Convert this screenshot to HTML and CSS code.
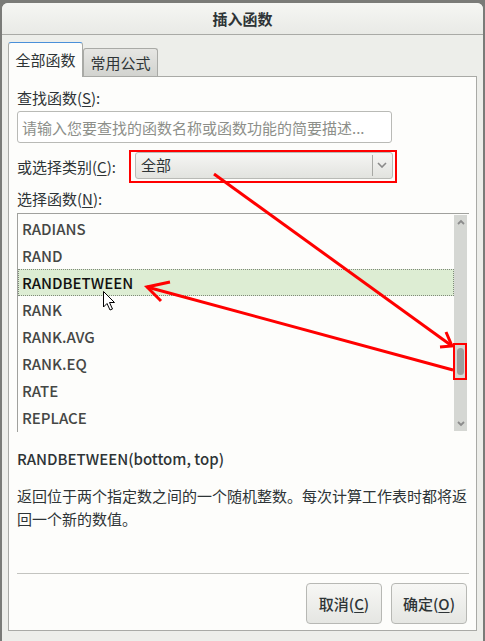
FILE: index.html
```html
<!DOCTYPE html>
<html lang="zh">
<head>
<meta charset="utf-8">
<title>插入函数</title>
<link rel="stylesheet" href="styles.css">
</head>
<body>
<div class="window">
  <div class="titlebar">插入函数</div>
  <div class="content">
    <div class="tabs">
      <div class="tab active">全部函数</div>
      <div class="tab">常用公式</div>
    </div>
    <div class="panel">
      <div class="label">查找函数(<u>S</u>):</div>
      <div class="input">请输入您要查找的函数名称或函数功能的简要描述...</div>
      <div class="row">
        <span class="label">或选择类别(<u>C</u>):</span>
        <div class="combo">
          <span class="combo-text">全部</span>
          <span class="divider"></span>
          <svg class="chev" width="10" height="6" viewBox="0 0 10 6"><path d="M1 1 L5 5 L9 1" fill="none" stroke="#8a8a8a" stroke-width="1.6"/></svg>
        </div>
      </div>
      <div class="label label-list">选择函数(<u>N</u>):</div>
      <div class="list">
        <div class="items">
          <div class="item">RADIANS</div>
          <div class="item">RAND</div>
          <div class="item selected">RANDBETWEEN</div>
          <div class="item">RANK</div>
          <div class="item">RANK.AVG</div>
          <div class="item">RANK.EQ</div>
          <div class="item">RATE</div>
          <div class="item">REPLACE</div>
        </div>
        <div class="scrollbar">
          <svg width="8" height="6" viewBox="0 0 8 6"><path d="M1 5 L4 2 L7 5" fill="none" stroke="#8c8c8c" stroke-width="1.8"/></svg>
          <div class="track"><div class="thumb"></div></div>
          <svg width="8" height="6" viewBox="0 0 8 6"><path d="M1 1 L4 4 L7 1" fill="none" stroke="#8c8c8c" stroke-width="1.8"/></svg>
        </div>
      </div>
      <div class="sig">RANDBETWEEN(bottom, top)</div>
      <div class="desc">返回位于两个指定数之间的一个随机整数。每次计算工作表时都将返回一个新的数值。</div>
      <div class="sep"></div>
      <div class="buttons">
        <div class="btn">取消(<u>C</u>)</div>
        <div class="btn">确定(<u>O</u>)</div>
      </div>
    </div>
  </div>
</div>
<svg class="annot" width="485" height="641" viewBox="0 0 485 641">
  <g fill="none" stroke="#f00" stroke-width="2">
    <rect x="130" y="151" width="266" height="31"/>
    <rect x="454" y="344" width="12" height="35"/>
  </g>
  <g fill="none" stroke="#f00" stroke-width="3" stroke-linecap="butt">
    <path d="M214 174 L452 346"/>
    <path d="M446 332 L452 346 L440 347"/>
    <path d="M453 370 L147 287"/>
    <path d="M170 282 L147 287 L161 301"/>
  </g>
  <path class="cursor" d="M103.5 291.5 L103.5 307 L107 303.5 L110 310 L112.5 309 L109.5 302.5 L114.5 302.5 Z" fill="#fff" stroke="#000" stroke-width="1"/>
</svg>
</body>
</html>
```

FILE: styles.css
```css
html, body {
  margin: 0;
  padding: 0;
}
body {
  width: 485px;
  height: 641px;
  overflow: hidden;
  background: #7a7b78;
  font-family: "Noto Sans CJK SC", "Noto Sans", sans-serif;
  font-size: 15px;
  color: #2e3436;
  position: relative;
}
u {
  text-decoration: underline;
  text-underline-offset: 2px;
}
.window {
  margin: 3px 2px 0 2px;
  height: 638px;
  background: #edeeea;
  border-radius: 6px 6px 0 0;
  display: flex;
  flex-direction: column;
}
.titlebar {
  height: 31px;
  border-bottom: 1px solid #a9aaa6;
  background: linear-gradient(#f5f6f3, #e9eae6);
  border-radius: 6px 6px 0 0;
  display: flex;
  align-items: center;
  justify-content: center;
  font-weight: bold;
  font-size: 15px;
  color: #2e3436;
}
.content {
  padding: 7px 6px 0 6px;
}
.tabs {
  display: flex;
  align-items: flex-end;
  height: 34px;
  position: relative;
  z-index: 1;
}
.tab {
  box-sizing: border-box;
  height: 28px;
  width: 75px;
  border: 1px solid #a9aaa6;
  border-bottom: none;
  border-radius: 3px 3px 0 0;
  background: linear-gradient(#e6e6e3, #d2d3cf);
  display: flex;
  align-items: center;
  justify-content: center;
  color: #2e3436;
}
.tab.active {
  height: 35px;
  margin-bottom: -1px;
  width: 75px;
  background: #fdfdfb;
  border-top: 1px solid #4a90d9;
  padding-bottom: 1px;
}
.panel {
  box-sizing: border-box;
  height: 555px;
  border: 1px solid #a9aaa6;
  background: #fdfdfb;
  padding: 11px 7px 0 8px;
  display: flex;
  flex-direction: column;
}
.label {
  line-height: 20px;
  height: 20px;
}
.input {
  box-sizing: border-box;
  margin-top: 3px;
  width: 375px;
  height: 32px;
  border: 1px solid #b9bab6;
  border-radius: 3px;
  background: #fff;
  color: #8d8f8a;
  padding-left: 4px;
  display: flex;
  align-items: center;
  font-size: 15px;
}
.row {
  margin-top: 9px;
  height: 26px;
  display: flex;
  align-items: center;
}
.row .label {
  width: 118px;
  margin-top: 4px;
}
.combo {
  box-sizing: border-box;
  width: 258px;
  height: 27px;
  border: 1px solid #b9bab6;
  border-radius: 3px;
  background: linear-gradient(#f6f6f4, #e2e3df);
  display: flex;
  align-items: center;
  padding-left: 5px;
}
.combo-text {
  flex: 1;
  line-height: 20px;
}
.divider {
  width: 1px;
  height: 21px;
  background: #a8a9a5;
  margin-right: 4px;
}
.chev {
  margin-right: 5px;
}
.label-list {
  margin-top: 11px;
}
.list {
  margin-top: 4px;
  width: 452px;
  height: 219px;
  box-sizing: border-box;
  border-top: 1px solid #a0a19d;
  border-left: 1px solid #a0a19d;
  display: flex;
  padding-top: 1px;
}
.items {
  flex: 1;
}
.item {
  box-sizing: border-box;
  height: 27px;
  line-height: 27px;
  padding-left: 4px;
  font-family: "Noto Sans CJK SC", sans-serif;
  font-weight: 500;
  font-size: 15px;
  color: #454745;
}
.item.selected {
  background: #ddedd3;
  outline: 1px dotted #7f8a7a;
  outline-offset: -1px;
  color: #111;
}
.scrollbar {
  width: 13px;
  height: 216px;
  margin-right: 2px;
  background: #d5d7d3;
  display: flex;
  flex-direction: column;
  align-items: center;
  padding: 4px 0 4px;
  box-sizing: border-box;
}
.track {
  flex: 1;
  width: 100%;
  display: flex;
  flex-direction: column;
  align-items: center;
  padding-top: 123px;
  box-sizing: border-box;
}
.thumb {
  width: 7px;
  height: 27px;
  border-radius: 4px;
  background: #9b9e9c;
}
.sig {
  margin-top: 16px;
  font-weight: 500;
  line-height: 22px;
  color: #2e3436;
}
.desc {
  margin-top: 14px;
  line-height: 23px;
  width: 452px;
  color: #2e3436;
}
.sep {
  margin-top: 43px;
  height: 1px;
  width: 452px;
  background: #c3c4c0;
}
.buttons {
  margin-top: 9px;
  display: flex;
  justify-content: flex-end;
  gap: 9px;
  padding-right: 2px;
}
.btn {
  box-sizing: border-box;
  width: 76px;
  height: 41px;
  border: 1px solid #b7b8b4;
  border-radius: 4px;
  background: linear-gradient(#f7f7f5, #e5e6e2);
  display: flex;
  align-items: center;
  justify-content: center;
  font-weight: 500;
  color: #2e3436;
}
.annot {
  position: absolute;
  left: 0;
  top: 0;
  pointer-events: none;
}
```
